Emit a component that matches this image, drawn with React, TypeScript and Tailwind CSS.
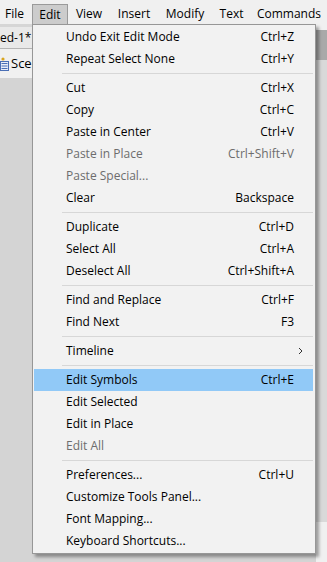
import React from 'react';

type Item =
  | { kind: 'sep' }
  | { kind: 'item'; label: string; shortcut?: string; disabled?: boolean; active?: boolean; sub?: boolean };

const sep: Item = { kind: 'sep' };

const items: Item[] = [
  { kind: 'item', label: 'Undo Exit Edit Mode', shortcut: 'Ctrl+Z' },
  { kind: 'item', label: 'Repeat Select None', shortcut: 'Ctrl+Y' },
  sep,
  { kind: 'item', label: 'Cut', shortcut: 'Ctrl+X' },
  { kind: 'item', label: 'Copy', shortcut: 'Ctrl+C' },
  { kind: 'item', label: 'Paste in Center', shortcut: 'Ctrl+V' },
  { kind: 'item', label: 'Paste in Place', shortcut: 'Ctrl+Shift+V', disabled: true },
  { kind: 'item', label: 'Paste Special...', disabled: true },
  { kind: 'item', label: 'Clear', shortcut: 'Backspace' },
  sep,
  { kind: 'item', label: 'Duplicate', shortcut: 'Ctrl+D' },
  { kind: 'item', label: 'Select All', shortcut: 'Ctrl+A' },
  { kind: 'item', label: 'Deselect All', shortcut: 'Ctrl+Shift+A' },
  sep,
  { kind: 'item', label: 'Find and Replace', shortcut: 'Ctrl+F' },
  { kind: 'item', label: 'Find Next', shortcut: 'F3' },
  sep,
  { kind: 'item', label: 'Timeline', sub: true },
  sep,
  { kind: 'item', label: 'Edit Symbols', shortcut: 'Ctrl+E', active: true },
  { kind: 'item', label: 'Edit Selected' },
  { kind: 'item', label: 'Edit in Place' },
  { kind: 'item', label: 'Edit All', disabled: true },
  sep,
  { kind: 'item', label: 'Preferences...', shortcut: 'Ctrl+U' },
  { kind: 'item', label: 'Customize Tools Panel...' },
  { kind: 'item', label: 'Font Mapping...' },
  { kind: 'item', label: 'Keyboard Shortcuts...' },
];

const menuBar = [
  { label: 'File', w: 'w-[32px] pl-[5px] justify-start' },
  { label: 'Edit', w: 'w-[36px] justify-center', open: true },
  { label: 'View', w: 'w-[42px] justify-center' },
  { label: 'Insert', w: 'w-[48px] justify-center' },
  { label: 'Modify', w: 'w-[54px] justify-center' },
  { label: 'Text', w: 'w-[39px] justify-center' },
  { label: 'Commands', w: 'w-[76px] justify-center' },
];

const SceneIcon = () => (
  <svg width="9" height="14" viewBox="0 0 9 14" className="shrink-0">
    <circle cx="3" cy="2" r="1.6" fill="#d9a520" />
    <rect x="0.5" y="4.5" width="8" height="9" fill="#e9eef8" stroke="#4a6fb5" />
    <rect x="1.5" y="6" width="6" height="1" fill="#4a6fb5" />
    <rect x="1.5" y="8.5" width="6" height="1" fill="#4a6fb5" />
    <rect x="1.5" y="11" width="6" height="1" fill="#4a6fb5" />
  </svg>
);

export default function App() {
  return (
    <div
      className="relative w-[327px] h-[562px] overflow-hidden bg-[#d4d4d4] text-[12px] text-black"
      style={{ fontFamily: '"Open Sans", "Noto Sans", Arial, sans-serif' }}
    >
      {/* menu bar */}
      <div className="flex h-[24px] bg-[#f0f0f0] pt-[4px]">
        {menuBar.map(m => (
          <div
            key={m.label}
            className={`${m.w} h-[20px] shrink-0 flex items-center whitespace-nowrap ${
              m.open ? 'bg-[#cccccc] border border-b-0 border-[#9a9a9a]' : ''
            }`}
          >
            {m.label}
          </div>
        ))}
      </div>

      {/* background window */}
      <div className="flex h-[538px]">
        <div className="flex-1 flex flex-col">
          <div className="h-[3px] bg-[#d6d6d6]" />
          <div className="h-[22px] bg-[#e9e9e9] border-b border-[#b5b5b5] flex items-center whitespace-nowrap">
            ed-1*
          </div>
          <div className="h-[29px] bg-[#f0f0f0] flex items-center gap-[2px] text-[13px] whitespace-nowrap">
            <SceneIcon />
            <span>Scene 1</span>
          </div>
          <div className="flex-1 bg-[#d4d4d4]" />
        </div>
        <div className="w-[11px] flex flex-col">
          <div className="h-[6px] bg-[#f0f0f0]" />
          <div className="h-[30px] bg-[#a9a9a9]" />
          <div className="flex-1 bg-[#d9d9d9]" />
          <div className="h-[40px] bg-[#f0f0f0]" />
        </div>
      </div>

      {/* open Edit menu */}
      <div className="absolute left-[32px] top-[24px] w-[284px] bg-[#f2f2f2] border border-[#979797] pl-[1px] pr-[2px] py-[1px] shadow-[3px_3px_3px_rgba(0,0,0,0.35)]">
        {items.map((it, i) =>
          it.kind === 'sep' ? (
            <div key={i} className="h-[7px] flex items-center pl-[28px]">
              <div className="h-px w-full bg-[#d7d7d7]" />
            </div>
          ) : (
            <div
              key={i}
              className={`h-[22px] flex items-center pl-[32px] pr-[19px] whitespace-nowrap ${
                it.active ? 'bg-[#91c9f7]' : ''
              } ${it.disabled ? 'text-[#6d6d6d]' : 'text-black'}`}
            >
              <span className="flex-1">{it.label}</span>
              {it.shortcut && <span>{it.shortcut}</span>}
              {it.sub && (
                <svg width="5" height="8" viewBox="0 0 5 8" className="mr-[-9px]">
                  <path d="M1 1 L4 4 L1 7" fill="none" stroke="#333" strokeWidth="1" />
                </svg>
              )}
            </div>
          )
        )}
      </div>
    </div>
  );
}
